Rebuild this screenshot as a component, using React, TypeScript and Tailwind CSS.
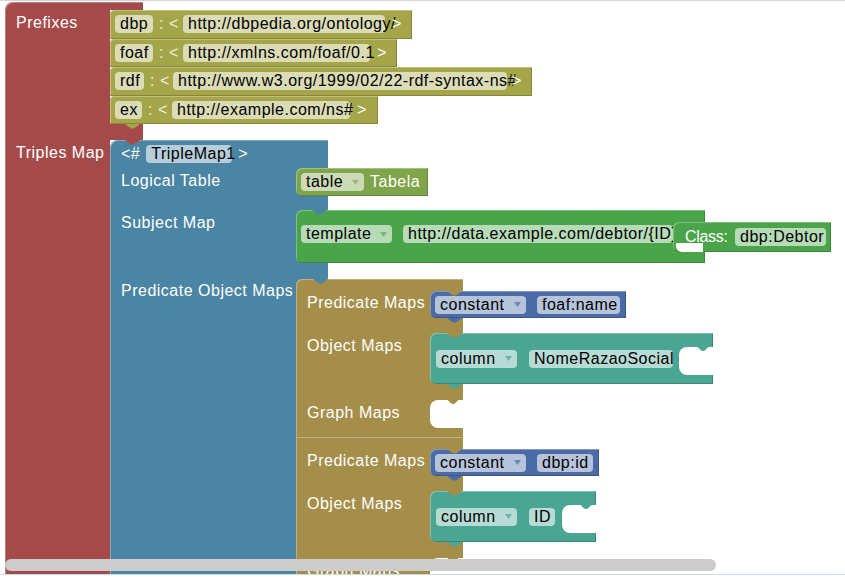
import React from "react";

const bevel = "shadow-[inset_1px_1px_0_rgba(255,255,255,0.3),inset_-1px_-1px_0_rgba(0,0,0,0.18)]";

function Field({ className = "", children }: { className?: string; children: React.ReactNode }) {
    return (
        <span className={`flex h-[18px] shrink-0 items-center whitespace-nowrap rounded-[4px] bg-white/60 pl-[5px] leading-none text-black ${className}`}>
            {children}
        </span>
    );
}

function Drop({ className = "", label, arrow }: { className?: string; label: string; arrow: string }) {
    return (
        <Field className={`justify-between pr-[5px] ${className}`}>
            <span>{label}</span>
            <svg width="7" height="5" viewBox="0 0 7 5" className={arrow}>
                <path d="M0 0H7L3.5 5Z" />
            </svg>
        </Field>
    );
}

// previous-statement notch / next-statement tab
function Notch({ className }: { className: string }) {
    return (
        <svg width="15" height="5" viewBox="0 0 15 5" className={`absolute ${className}`}>
            <path d="M0 0L6 4.5H9L15 0Z" />
        </svg>
    );
}

// empty value input cut into the right edge of a block
function Slot({ className, bump }: { className: string; bump: string }) {
    return (
        <div className={`absolute right-0 rounded-l-[8px] bg-white ${className}`}>
            <svg width="12" height="5" viewBox="0 0 12 5" className={`absolute right-[4px] top-0 ${bump}`}>
                <path d="M0 0C2 0 3 4 6 4S10 0 12 0Z" />
            </svg>
        </div>
    );
}

function Prefix({ width, short, shortW, sepW, url, urlW, gap, last }: {
    width: string; short: string; shortW: string; sepW: string; url: string; urlW: string; gap: string; last?: boolean;
}) {
    return (
        <div className={`relative flex h-[28.5px] items-center rounded-tl-[4px] bg-[#a5a54a] pl-[5px] ${bevel} ${width}`}>
            <Field className={shortW}>{short}</Field>
            <span className={`shrink-0 whitespace-pre pl-[6px] text-[#f1f1dc] ${sepW}`}>: {"<"}</span>
            <Field className={urlW}>{url}</Field>
            <span className={`text-white ${gap}`}>{">"}</span>
            {last && <Notch className="left-[15px] top-full fill-[#a5a54a]" />}
        </div>
    );
}

function Constant({ width, value, valueW }: { width: string; value: string; valueW: string }) {
    return (
        <div className={`relative flex h-[27px] shrink-0 items-center rounded-l-[6px] bg-[#4a6ba5] pl-[5px] ${bevel} ${width}`}>
            <Notch className="left-[17px] top-0 fill-[#a58e4a]" />
            <Drop label="constant" arrow="fill-[#6b88bb]" className="w-[91px]" />
            <Field className={`ml-[11px] ${valueW}`}>{value}</Field>
            <Notch className="left-[17px] top-full fill-[#4a6ba5]" />
        </div>
    );
}

function Column({ width, value, valueW }: { width: string; value: string; valueW: string }) {
    return (
        <div className={`relative flex h-[51px] shrink-0 items-center rounded-l-[6px] bg-[#4aa593] pl-[6px] ${bevel} ${width}`}>
            <Notch className="left-[17px] top-0 fill-[#a58e4a]" />
            <Drop label="column" arrow="fill-[#6cb5a5]" className="w-[81px]" />
            <Field className={`ml-[12px] ${valueW}`}>{value}</Field>
            <Slot className="top-[14px] h-[28px] w-[34px]" bump="fill-[#4aa593]" />
            <Notch className="left-[17px] top-full fill-[#4aa593]" />
        </div>
    );
}

function PredicateObject({ first, constant, constantW, constantValW, column, columnW, columnValW }: {
    first?: boolean; constant: string; constantW: string; constantValW: string; column: string; columnW: string; columnValW: string;
}) {
    return (
        <div className={`relative flex w-[167px] shrink-0 flex-col bg-[#a58e4a] pb-[9px] pt-[12px] shadow-[inset_1px_1px_0_rgba(255,255,255,0.3)] ${first ? "rounded-tl-[6px]" : ""}`}>
            {first && <Notch className="left-[17px] top-0 fill-[#4a85a3]" />}
            <div className="flex h-[27px]">
                <div className="w-[134px] shrink-0 pl-[11px] pt-[2px] leading-[19px]">Predicate Maps</div>
                <Constant width={constantW} value={constant} valueW={constantValW} />
            </div>
            <div className="mt-[15px] flex h-[51px]">
                <div className="w-[134px] shrink-0 pl-[11px] pt-[3px] leading-[19px]">Object Maps</div>
                <Column width={columnW} value={column} valueW={columnValW} />
            </div>
            <div className="relative mt-[16px] flex h-[28px]">
                <div className="w-[134px] shrink-0 pl-[11px] pt-[3px] leading-[19px]">Graph Maps</div>
                <Slot className="top-0 h-[28px] w-[33px]" bump="fill-[#a58e4a]" />
            </div>
        </div>
    );
}

function TriplesMap() {
    return (
        <div className="relative flex w-[218px] shrink-0 flex-col rounded-tl-[8px] bg-[#4a85a3] shadow-[inset_1px_1px_0_rgba(255,255,255,0.3)]">
            <Notch className="left-[15px] top-0 fill-[#a54a4a]" />
            <div className="flex h-[28px] items-center pl-[11px]">
                <span>{"<#"}</span>
                <Field className="ml-[6px] w-[86px] bg-white/50">TripleMap1</Field>
                <span className="ml-[6px]">{">"}</span>
            </div>

            <div className="flex h-[28px]">
                <div className="w-[186px] shrink-0 pl-[11px] pt-[3px] leading-[19px]">Logical Table</div>
                <div className={`flex h-[28px] w-[132px] shrink-0 items-center rounded-l-[6px] bg-[#7fa54a] pl-[5px] ${bevel}`}>
                    <Drop label="table" arrow="fill-[#9cb878]" className="w-[63px]" />
                    <span className="ml-[6px]">Tabela</span>
                </div>
            </div>

            <div className="h-[14px]" />

            <div className="flex h-[53px]">
                <div className="w-[186px] shrink-0 pl-[11px] pt-[3px] leading-[19px]">Subject Map</div>
                <div className={`relative flex h-[53px] w-[409px] shrink-0 items-start rounded-l-[6px] bg-[#4aa54a] pl-[5px] ${bevel}`}>
                    <Notch className="left-[16px] top-0 fill-[#4a85a3]" />
                    <Drop label="template" arrow="fill-[#74bb74]" className="mt-[15px] w-[91px]" />
                    <Field className="ml-[11px] mt-[15px] w-[270px]">http://data.example.com/debtor/{"{ID}"}</Field>
                    <div className={`relative z-10 mt-[12px] flex h-[30px] w-[158px] shrink-0 items-center rounded-l-[6px] bg-[#4aa54a] pl-[12px] pr-[5px] ${bevel}`}>
                        <span className="tracking-[-0.3px]">Class:</span>
                        <Field className="ml-auto w-[91px]">dbp:Debtor</Field>
                        <div className="absolute bottom-0 left-[3px] h-[9px] w-[27px] rounded-bl-[6px] bg-white" />
                    </div>
                </div>
            </div>

            <div className="h-[16px]" />

            <div className="flex">
                <div className="w-[186px] shrink-0 pl-[11px] pt-[2px] leading-[19px]">Predicate Object Maps</div>
                <div className="flex shrink-0 flex-col">
                    <PredicateObject
                        first
                        constant="foaf:name"
                        constantW="w-[196px]"
                        constantValW="w-[83px]"
                        column="NomeRazaoSocial"
                        columnW="w-[283px]"
                        columnValW="w-[144px]"
                    />
                    <PredicateObject
                        constant="dbp:id"
                        constantW="w-[169px]"
                        constantValW="w-[56px]"
                        column="ID"
                        columnW="w-[166px]"
                        columnValW="w-[26px]"
                    />
                </div>
            </div>
        </div>
    );
}

export default function App() {
    return (
        <div className="h-[588px] w-[845px] bg-white font-['Liberation_Sans',Arial,sans-serif] text-[16px] tracking-[0.5px] text-white">
            <div className="relative h-[575px] overflow-hidden border-y border-b-[#c7dde9] border-t-[#d6d6d6]">
                <div className="absolute left-[5px] top-[1px] flex flex-col">
                    <div className="h-[8px] w-[138px] rounded-tl-[8px] bg-[#a54a4a] shadow-[inset_1px_1px_0_rgba(255,255,255,0.3)]" />
                    <div className="flex">
                        <div className="w-[105px] shrink-0 bg-[#a54a4a] pl-[11px] pt-[3px] leading-[19px] shadow-[inset_1px_0_0_rgba(255,255,255,0.3)]">
                            Prefixes
                        </div>
                        <div className="flex flex-col">
                            <Prefix width="w-[302px]" short="dbp" shortW="w-[38px]" sepW="w-[30px]" url="http://dbpedia.org/ontology/" urlW="w-[202px]" gap="ml-[7px]" />
                            <Prefix width="w-[287px]" short="foaf" shortW="w-[38px]" sepW="w-[30px]" url="http://xmlns.com/foaf/0.1" urlW="w-[187px]" gap="ml-[7px]" />
                            <Prefix width="w-[422px]" short="rdf" shortW="w-[29px]" sepW="w-[29px]" url="http://www.w3.org/1999/02/22-rdf-syntax-ns#" urlW="w-[334px]" gap="ml-[5px]" />
                            <Prefix width="w-[268px]" short="ex" shortW="w-[27px]" sepW="w-[30px]" url="http://example.com/ns#" urlW="w-[178px]" gap="ml-[7px]" last />
                        </div>
                    </div>
                    <div className="h-[16px] w-[138px] bg-[#a54a4a] shadow-[inset_1px_0_0_rgba(255,255,255,0.3)]" />
                    <div className="flex">
                        <div className="w-[105px] shrink-0 bg-[#a54a4a] pl-[11px] pt-[3px] leading-[19px] shadow-[inset_1px_0_0_rgba(255,255,255,0.3)]">
                            Triples Map
                        </div>
                        <TriplesMap />
                    </div>
                </div>

                <div className="absolute left-[5px] top-[558px] h-[12px] w-[711px] rounded-full bg-[#cccccc]" />
            </div>
        </div>
    );
}
